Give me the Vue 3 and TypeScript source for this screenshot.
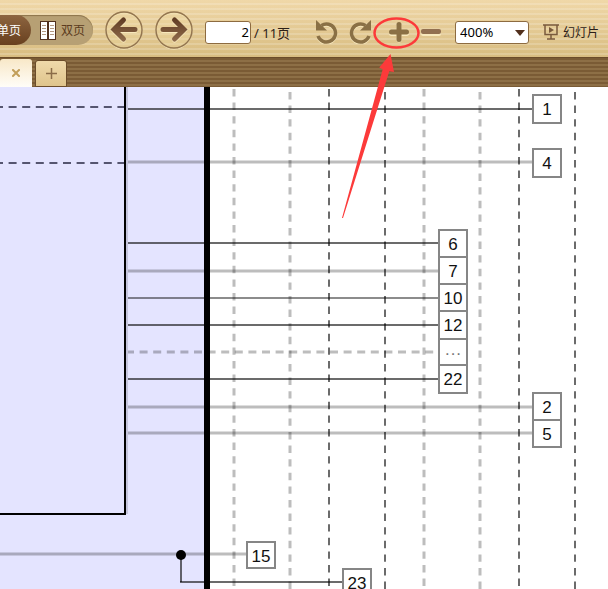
<script setup lang="ts">
import { ref } from 'vue'

interface Wire { y: number; x1: number; x2: number; tone: string }
interface Guide { x: number; start: number; tone: string }
interface Box { x: number; y: number; h: number; label: string }

const page = ref('2')
const zoom = ref('400%')
const zoomLevels: string[] = ['100%', '200%', '400%']

const wires: Wire[] = [
  { y: 22, x1: 126, x2: 533, tone: 'dark' },
  { y: 75, x1: 126, x2: 533, tone: 'light' },
  { y: 156, x1: 126, x2: 439, tone: 'dark' },
  { y: 184, x1: 126, x2: 439, tone: 'light' },
  { y: 211, x1: 126, x2: 439, tone: 'mid' },
  { y: 238, x1: 126, x2: 439, tone: 'dark' },
  { y: 265, x1: 126, x2: 439, tone: 'dashed' },
  { y: 292, x1: 126, x2: 439, tone: 'dark' },
  { y: 320, x1: 126, x2: 533, tone: 'light' },
  { y: 346, x1: 126, x2: 533, tone: 'light' },
  { y: 467, x1: 0, x2: 247, tone: 'light' },
  { y: 495, x1: 180, x2: 343, tone: 'dark' },
]

const guides: Guide[] = [
  { x: 234, start: 2, tone: 'soft' },
  { x: 290, start: 5, tone: 'soft' },
  { x: 329, start: 2, tone: 'hard' },
  { x: 385, start: 5, tone: 'hard' },
  { x: 424, start: 2, tone: 'soft' },
  { x: 480, start: 5, tone: 'soft' },
  { x: 519, start: 2, tone: 'hard' },
  { x: 575, start: 5, tone: 'hard' },
]

const boxes: Box[] = [
  { x: 533, y: 8, h: 28, label: '1' },
  { x: 533, y: 62, h: 28, label: '4' },
  { x: 439, y: 143, h: 27, label: '6' },
  { x: 439, y: 170, h: 27, label: '7' },
  { x: 439, y: 197, h: 27, label: '10' },
  { x: 439, y: 224, h: 28, label: '12' },
  { x: 439, y: 252, h: 26, label: '···' },
  { x: 439, y: 278, h: 28, label: '22' },
  { x: 533, y: 306, h: 27, label: '2' },
  { x: 533, y: 333, h: 27, label: '5' },
  { x: 247, y: 455, h: 26, label: '15' },
  { x: 343, y: 482, h: 27, label: '23' },
]
</script>

<template>
  <div class="reader">
    <header class="toolbar">
      <div class="modes">
        <button type="button" class="mode active">单页</button>
        <button type="button" class="mode spread">
          <svg width="16" height="19" viewBox="0 0 16 19" aria-hidden="true">
            <path d="M0 0h16v19H0z" fill="#51301d" />
            <path d="M1 1h6v17H1zM9 1h6v17H9z" fill="#fff" />
            <path d="M2 4.500h4M2 7.500h4M2 10.500h4M2 13.500h4M10 4.500h4M10 7.500h4M10 10.500h4M10 13.500h4" stroke="#b39a82" />
          </svg>
          双页
        </button>
      </div>

      <button type="button" class="round" aria-label="上一页">
        <svg width="38" height="38" viewBox="0 0 38 38">
          <circle cx="19" cy="20" r="18" fill="none" stroke="#f8e9bd" />
          <circle cx="19" cy="19" r="18" fill="#f0d9a3" fill-opacity=".3" stroke="#94764f" stroke-width="1.500" />
          <path d="M30 18.500H12M18.500 9L9 18.500L18.500 28" transform="translate(0 1)" fill="none" stroke="#f8e9bd" stroke-width="5" stroke-linecap="round" stroke-linejoin="miter" />
          <path d="M30 18.500H12M18.500 9L9 18.500L18.500 28" fill="none" stroke="url(#arrow)" stroke-width="5" stroke-linecap="round" stroke-linejoin="miter" />
          <defs>
            <linearGradient id="arrow" gradientUnits="userSpaceOnUse" x1="0" y1="6" x2="0" y2="32">
              <stop offset="0" stop-color="#5c3820" /><stop offset="1" stop-color="#94704f" />
            </linearGradient>
          </defs>
        </svg>
      </button>
      <button type="button" class="round" aria-label="下一页">
        <svg width="38" height="38" viewBox="0 0 38 38">
          <circle cx="19" cy="20" r="18" fill="none" stroke="#f8e9bd" />
          <circle cx="19" cy="19" r="18" fill="#f0d9a3" fill-opacity=".3" stroke="#94764f" stroke-width="1.500" />
          <path d="M8 18.500H26M19.500 9L29 18.500L19.500 28" transform="translate(0 1)" fill="none" stroke="#f8e9bd" stroke-width="5" stroke-linecap="round" stroke-linejoin="miter" />
          <path d="M8 18.500H26M19.500 9L29 18.500L19.500 28" fill="none" stroke="url(#arrow)" stroke-width="5" stroke-linecap="round" stroke-linejoin="miter" />
        </svg>
      </button>

      <label class="pager">
        <input v-model="page" type="text" aria-label="页码" />
        <span>/ 11页</span>
      </label>

      <div class="tools">
        <button type="button" aria-label="向左旋转">
          <svg width="22" height="24" viewBox="0 0 22 24">
            <path d="M5.500 5.500A9 9 0 1 1 2 16" transform="translate(0 1)" fill="none" stroke="#f6e6ba" stroke-width="3.500" />
            <path d="M5.500 5.500A9 9 0 1 1 2 16" fill="none" stroke="#8a7045" stroke-width="3.500" />
            <path d="M0 0L11 10.500H0z" fill="#8a7045" />
          </svg>
        </button>
        <button type="button" aria-label="向右旋转">
          <svg width="22" height="24" viewBox="0 0 22 24">
            <path d="M16.500 5.500A9 9 0 1 0 20 16" transform="translate(0 1)" fill="none" stroke="#f6e6ba" stroke-width="3.500" />
            <path d="M16.500 5.500A9 9 0 1 0 20 16" fill="none" stroke="#8a7045" stroke-width="3.500" />
            <path d="M22 0L11 10.500H22z" fill="#8a7045" />
          </svg>
        </button>
      </div>

      <div class="tools zooms">
        <button type="button" aria-label="放大">
          <svg width="20" height="21" viewBox="0 0 20 21">
            <path d="M2.500 11.500h15M10 4v14" stroke="#f8e9bd" stroke-width="5" stroke-linecap="round" />
            <path d="M2.500 10h15M10 2.500v15" stroke="#8a7045" stroke-width="5" stroke-linecap="round" />
          </svg>
        </button>
        <button type="button" aria-label="缩小">
          <svg width="20" height="21" viewBox="0 0 20 21">
            <rect y="9" width="20" height="5" rx="2" fill="#f8e9bd" />
            <rect y="7" width="20" height="5" rx="2" fill="#927050" />
          </svg>
        </button>
      </div>

      <div class="scale">
        <select v-model="zoom" aria-label="缩放比例">
          <option v-for="level in zoomLevels" :key="level">{{ level }}</option>
        </select>
        <svg class="caret" width="10" height="6" viewBox="0 0 10 6" aria-hidden="true">
          <path d="M0 0h10L5 6z" fill="#51301d" />
        </svg>
      </div>

      <button type="button" class="slides">
        <svg width="16" height="16" viewBox="0 0 16 16" aria-hidden="true">
          <path d="M0 1h16M2 1v9.500h12V1M8 10v5M4 15h8" fill="none" stroke="#7a5a3c" stroke-width="1.500" />
          <path d="M6 3l5 3l-5 3z" fill="#7a5a3c" />
        </svg>
        幻灯片
      </button>
    </header>

    <nav class="tabs">
      <button type="button" class="tab current" aria-label="关闭标签">
        <svg width="8" height="8" viewBox="0 0 8 8"><path d="M1 1l6 6M7 1L1 7" stroke="#c29f5b" stroke-width="2" stroke-linecap="square" /></svg>
      </button>
      <button type="button" class="tab add" aria-label="新标签">
        <svg width="11" height="11" viewBox="0 0 11 11"><path d="M0 5.500h11M5.500 0v11" stroke="#8a6c48" stroke-width="1.500" /></svg>
      </button>
    </nav>

    <main class="sheet">
      <svg class="drawing">
        <rect width="207" height="100%" fill="#e4e4ff" />
        <line v-for="g in guides" :key="g.x" :class="g.tone" :x1="g.x" :x2="g.x" :y1="g.start" y2="100%" />
        <line v-for="w in wires" :key="w.y" :class="w.tone" :x1="w.x1" :x2="w.x2" :y1="w.y" :y2="w.y" />
        <path d="M-5 20H125M-5 76H125" class="inner-dash" />
        <path d="M127 0V427" stroke="#c5c5dd" stroke-width="2" />
        <path d="M125 0V427H0" fill="none" stroke="#000" stroke-width="2" />
        <path d="M181 467V495" class="dark" />
        <circle cx="181" cy="468" r="5" />
        <rect x="204" width="6" height="100%" />
        <g v-for="b in boxes" :key="b.label">
          <rect class="box" :x="b.x" :y="b.y" width="28" :height="b.h" />
          <text :class="{ dots: b.label === '···' }" :x="b.x + 14" :y="b.y + 20">{{ b.label }}</text>
        </g>
      </svg>
    </main>

    <svg class="callout" width="608" height="230" aria-hidden="true">
      <ellipse cx="396.500" cy="33" rx="22" ry="14.500" fill="none" stroke="#fc3a3a" stroke-width="2.500" />
      <path d="M390.500 54L394 72L389.300 71.300L343 218H342L382.700 69.300L379.300 67.500z" fill="#fc3a3a" />
    </svg>
  </div>
</template>

<style>
body {
  margin: 0;
}
</style>

<style scoped>
.reader {
  position: relative;
  display: flex;
  flex-direction: column;
  min-height: 100vh;
  overflow: hidden;
  font-family: "Noto Sans", "Noto Sans CJK SC", sans-serif;
  font-size: 12px;
  color: #2c2018;
}
button {
  display: flex;
  align-items: center;
  flex: none;
  padding: 0;
  border: 0;
  background: none;
  font: inherit;
  color: inherit;
  white-space: nowrap;
}
svg {
  display: block;
  flex: none;
}
.toolbar {
  display: flex;
  align-items: center;
  height: 58px;
  padding-top: 3px;
  box-sizing: border-box;
  border-bottom: 1px solid #6b4c2a;
  background:
    repeating-linear-gradient(#fff0 0 3px, #ffffff2e 3px 5px),
    linear-gradient(#f0d8a8, #d8bc80);
}
.modes {
  display: flex;
  height: 30px;
  border-radius: 0 15px 15px 0;
  background: #b7a074;
  box-shadow: inset 0 1px 1px #8d744b;
}
.mode.active {
  justify-content: flex-end;
  width: 31px;
  padding-right: 10px;
  border-radius: 0 15px 15px 0;
  background: linear-gradient(#8d6540, #68401f);
  color: #fff;
}
.mode.spread {
  gap: 5px;
  padding: 0 8px 0 9px;
  color: #5c3c20;
}
.round {
  margin-left: 12px;
}
.round svg {
  overflow: visible;
}
.pager {
  display: flex;
  align-items: center;
  gap: 3px;
  margin: 4px 0 0 12px;
  font-size: 13px;
  white-space: nowrap;
}
.pager input {
  box-sizing: border-box;
  width: 46px;
  height: 23px;
  padding: 0 1px;
  border: 1px solid #8d6b40;
  border-radius: 3px;
  background: #fff;
  font: inherit;
  text-align: right;
}
.tools {
  display: flex;
  gap: 11px;
  margin: 4px 0 0 26px;
}
.zooms {
  gap: 12px;
  margin-left: 18px;
}
.scale {
  position: relative;
  margin: 4px 0 0 14px;
}
.scale select {
  display: block;
  box-sizing: border-box;
  width: 74px;
  height: 23px;
  padding: 0 4px;
  border: 1px solid #8d6b40;
  border-radius: 3px;
  background: #fff;
  appearance: none;
  font: inherit;
  font-size: 13px;
}
.caret {
  position: absolute;
  top: 9px;
  right: 4px;
  pointer-events: none;
}
.slides {
  gap: 4px;
  margin: 4px 0 0 14px;
}
.tabs {
  display: flex;
  align-items: flex-end;
  gap: 3px;
  height: 29px;
  background: repeating-linear-gradient(#7a5b35 0 2px, #8d6f46 2px 4px);
}
.tab {
  justify-content: center;
  box-sizing: border-box;
  border-radius: 3px 3px 0 0;
}
.tab.current {
  width: 32px;
  height: 28px;
  background: linear-gradient(#f8e8c8, #fffdf8);
}
.tab.add {
  width: 32px;
  height: 27px;
  border: 1px solid #6b4c2a;
  background: linear-gradient(#efd9aa, #dfc48c);
}
.sheet {
  display: flex;
  flex: 1;
  min-height: 502px;
  background: #fff;
}
.drawing {
  flex: 1;
  width: 100%;
}
.dark {
  stroke: #000;
  stroke-opacity: 0.58;
  stroke-width: 2;
}
.mid {
  stroke: #000;
  stroke-opacity: 0.45;
  stroke-width: 2;
}
.light {
  stroke: #000;
  stroke-opacity: 0.26;
  stroke-width: 3;
}
.dashed {
  stroke: #000;
  stroke-opacity: 0.26;
  stroke-width: 3;
  stroke-dasharray: 8 5.6;
}
.inner-dash {
  stroke: #555570;
  stroke-width: 2;
  stroke-dasharray: 8 5.6;
}
.hard,
.soft {
  stroke: #000;
  stroke-opacity: 0.58;
  stroke-width: 2;
  stroke-dasharray: 7.4 6.2;
}
.soft {
  stroke-opacity: 0.26;
  stroke-width: 3;
}
.box {
  fill: #fff;
  stroke: #868686;
  stroke-width: 2;
}
text {
  fill: #111;
  font-family: "Liberation Sans", Arial, sans-serif;
  font-size: 17px;
  text-anchor: middle;
}
.dots {
  fill: #777;
}
.callout {
  position: absolute;
  top: 0;
  left: 0;
  pointer-events: none;
}
</style>
